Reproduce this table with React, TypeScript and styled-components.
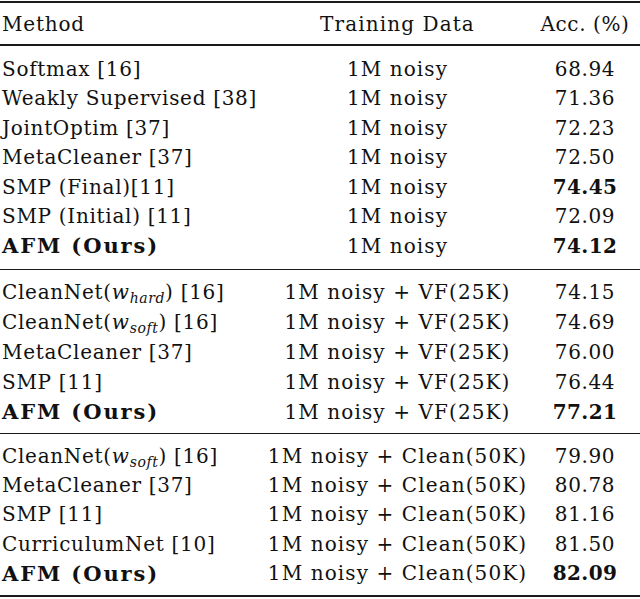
import styled, { createGlobalStyle } from "styled-components";

const GlobalStyle = createGlobalStyle`
  html, body {
    margin: 0;
    padding: 0;
    background: #ffffff;
  }
  body {
    font-family: "DejaVu Serif", "Liberation Serif", serif;
    color: #111111;
  }
`;

const Table = styled.div`
  width: 640px;
  margin-top: 1px;
  border-top: 2px solid #1a1a1a;
  border-bottom: 2.5px solid #1a1a1a;
`;

const Row = styled.div<{ $h?: number }>`
  display: grid;
  grid-template-columns: 265px 265px 110px;
  align-items: center;
  height: ${({ $h }) => $h ?? 29.5}px;
  font-size: 20px;
  white-space: nowrap;
`;

const HeaderRow = styled(Row)`
  border-bottom: 2px solid #1a1a1a;
  letter-spacing: 1.1px;

  & > span:first-child {
    letter-spacing: 0.8px;
  }
`;

const Group = styled.div<{ $top: number; $bottom: number; $rule?: boolean }>`
  padding-top: ${({ $top }) => $top}px;
  padding-bottom: ${({ $bottom }) => $bottom}px;
  border-bottom: ${({ $rule }) => ($rule ? "1.5px solid #1a1a1a" : "none")};
`;

const Method = styled.span<{ $bold?: boolean }>`
  padding-left: 2px;
  font-weight: ${({ $bold }) => ($bold ? 700 : 400)};
  font-size: ${({ $bold }) => ($bold ? "21px" : "20px")};
  letter-spacing: ${({ $bold }) => ($bold ? "1.9px" : "0.7px")};
`;

const Data = styled.span`
  text-align: center;
  letter-spacing: 1.1px;
`;

const Acc = styled.span<{ $bold?: boolean }>`
  text-align: center;
  font-weight: ${({ $bold }) => ($bold ? 700 : 400)};
  letter-spacing: ${({ $bold }) => ($bold ? "0.4px" : "0.6px")};
`;

const MathW = styled.i`
  font-style: italic;
`;

const Sub = styled.sub`
  font-style: italic;
  font-size: 14px;
  vertical-align: -4px;
  line-height: 0;
  letter-spacing: 0.6px;
`;

type Entry = {
  method: React.ReactNode;
  data: string;
  acc: string;
  boldMethod?: boolean;
  boldAcc?: boolean;
};

const cleanNet = (sub: string) => (
  <>
    CleanNet(<MathW>w</MathW>
    <Sub>{sub}</Sub>)&nbsp;[16]
  </>
);

const groups: { top: number; bottom: number; h: number; rule: boolean; rows: Entry[] }[] = [
  {
    top: 8,
    bottom: 8.5,
    h: 29.5,
    rule: true,
    rows: [
      { method: "Softmax [16]", data: "1M noisy", acc: "68.94" },
      { method: "Weakly Supervised [38]", data: "1M noisy", acc: "71.36" },
      { method: "JointOptim [37]", data: "1M noisy", acc: "72.23" },
      { method: "MetaCleaner [37]", data: "1M noisy", acc: "72.50" },
      { method: "SMP (Final)[11]", data: "1M noisy", acc: "74.45", boldAcc: true },
      { method: "SMP (Initial) [11]", data: "1M noisy", acc: "72.09" },
      { method: "AFM (Ours)", data: "1M noisy", acc: "74.12", boldMethod: true, boldAcc: true },
    ],
  },
  {
    top: 6.5,
    bottom: 6,
    h: 30,
    rule: true,
    rows: [
      { method: cleanNet("hard"), data: "1M noisy + VF(25K)", acc: "74.15" },
      { method: cleanNet("soft"), data: "1M noisy + VF(25K)", acc: "74.69" },
      { method: "MetaCleaner [37]", data: "1M noisy + VF(25K)", acc: "76.00" },
      { method: "SMP [11]", data: "1M noisy + VF(25K)", acc: "76.44" },
      { method: "AFM (Ours)", data: "1M noisy + VF(25K)", acc: "77.21", boldMethod: true, boldAcc: true },
    ],
  },
  {
    top: 7.5,
    bottom: 7,
    h: 29.4,
    rule: false,
    rows: [
      { method: cleanNet("soft"), data: "1M noisy + Clean(50K)", acc: "79.90" },
      { method: "MetaCleaner [37]", data: "1M noisy + Clean(50K)", acc: "80.78" },
      { method: "SMP [11]", data: "1M noisy + Clean(50K)", acc: "81.16" },
      { method: "CurriculumNet [10]", data: "1M noisy + Clean(50K)", acc: "81.50" },
      { method: "AFM (Ours)", data: "1M noisy + Clean(50K)", acc: "82.09", boldMethod: true, boldAcc: true },
    ],
  },
];

export default function App() {
  return (
    <>
      <GlobalStyle />
      <Table>
        <HeaderRow $h={41}>
          <Method>Method</Method>
          <Data>Training Data</Data>
          <Acc>Acc. (%)</Acc>
        </HeaderRow>
        {groups.map((g, gi) => (
          <Group key={gi} $top={g.top} $bottom={g.bottom} $rule={g.rule}>
            {g.rows.map((r, ri) => (
              <Row key={ri} $h={g.h}>
                <Method $bold={r.boldMethod}>{r.method}</Method>
                <Data>{r.data}</Data>
                <Acc $bold={r.boldAcc}>{r.acc}</Acc>
              </Row>
            ))}
          </Group>
        ))}
      </Table>
    </>
  );
}
